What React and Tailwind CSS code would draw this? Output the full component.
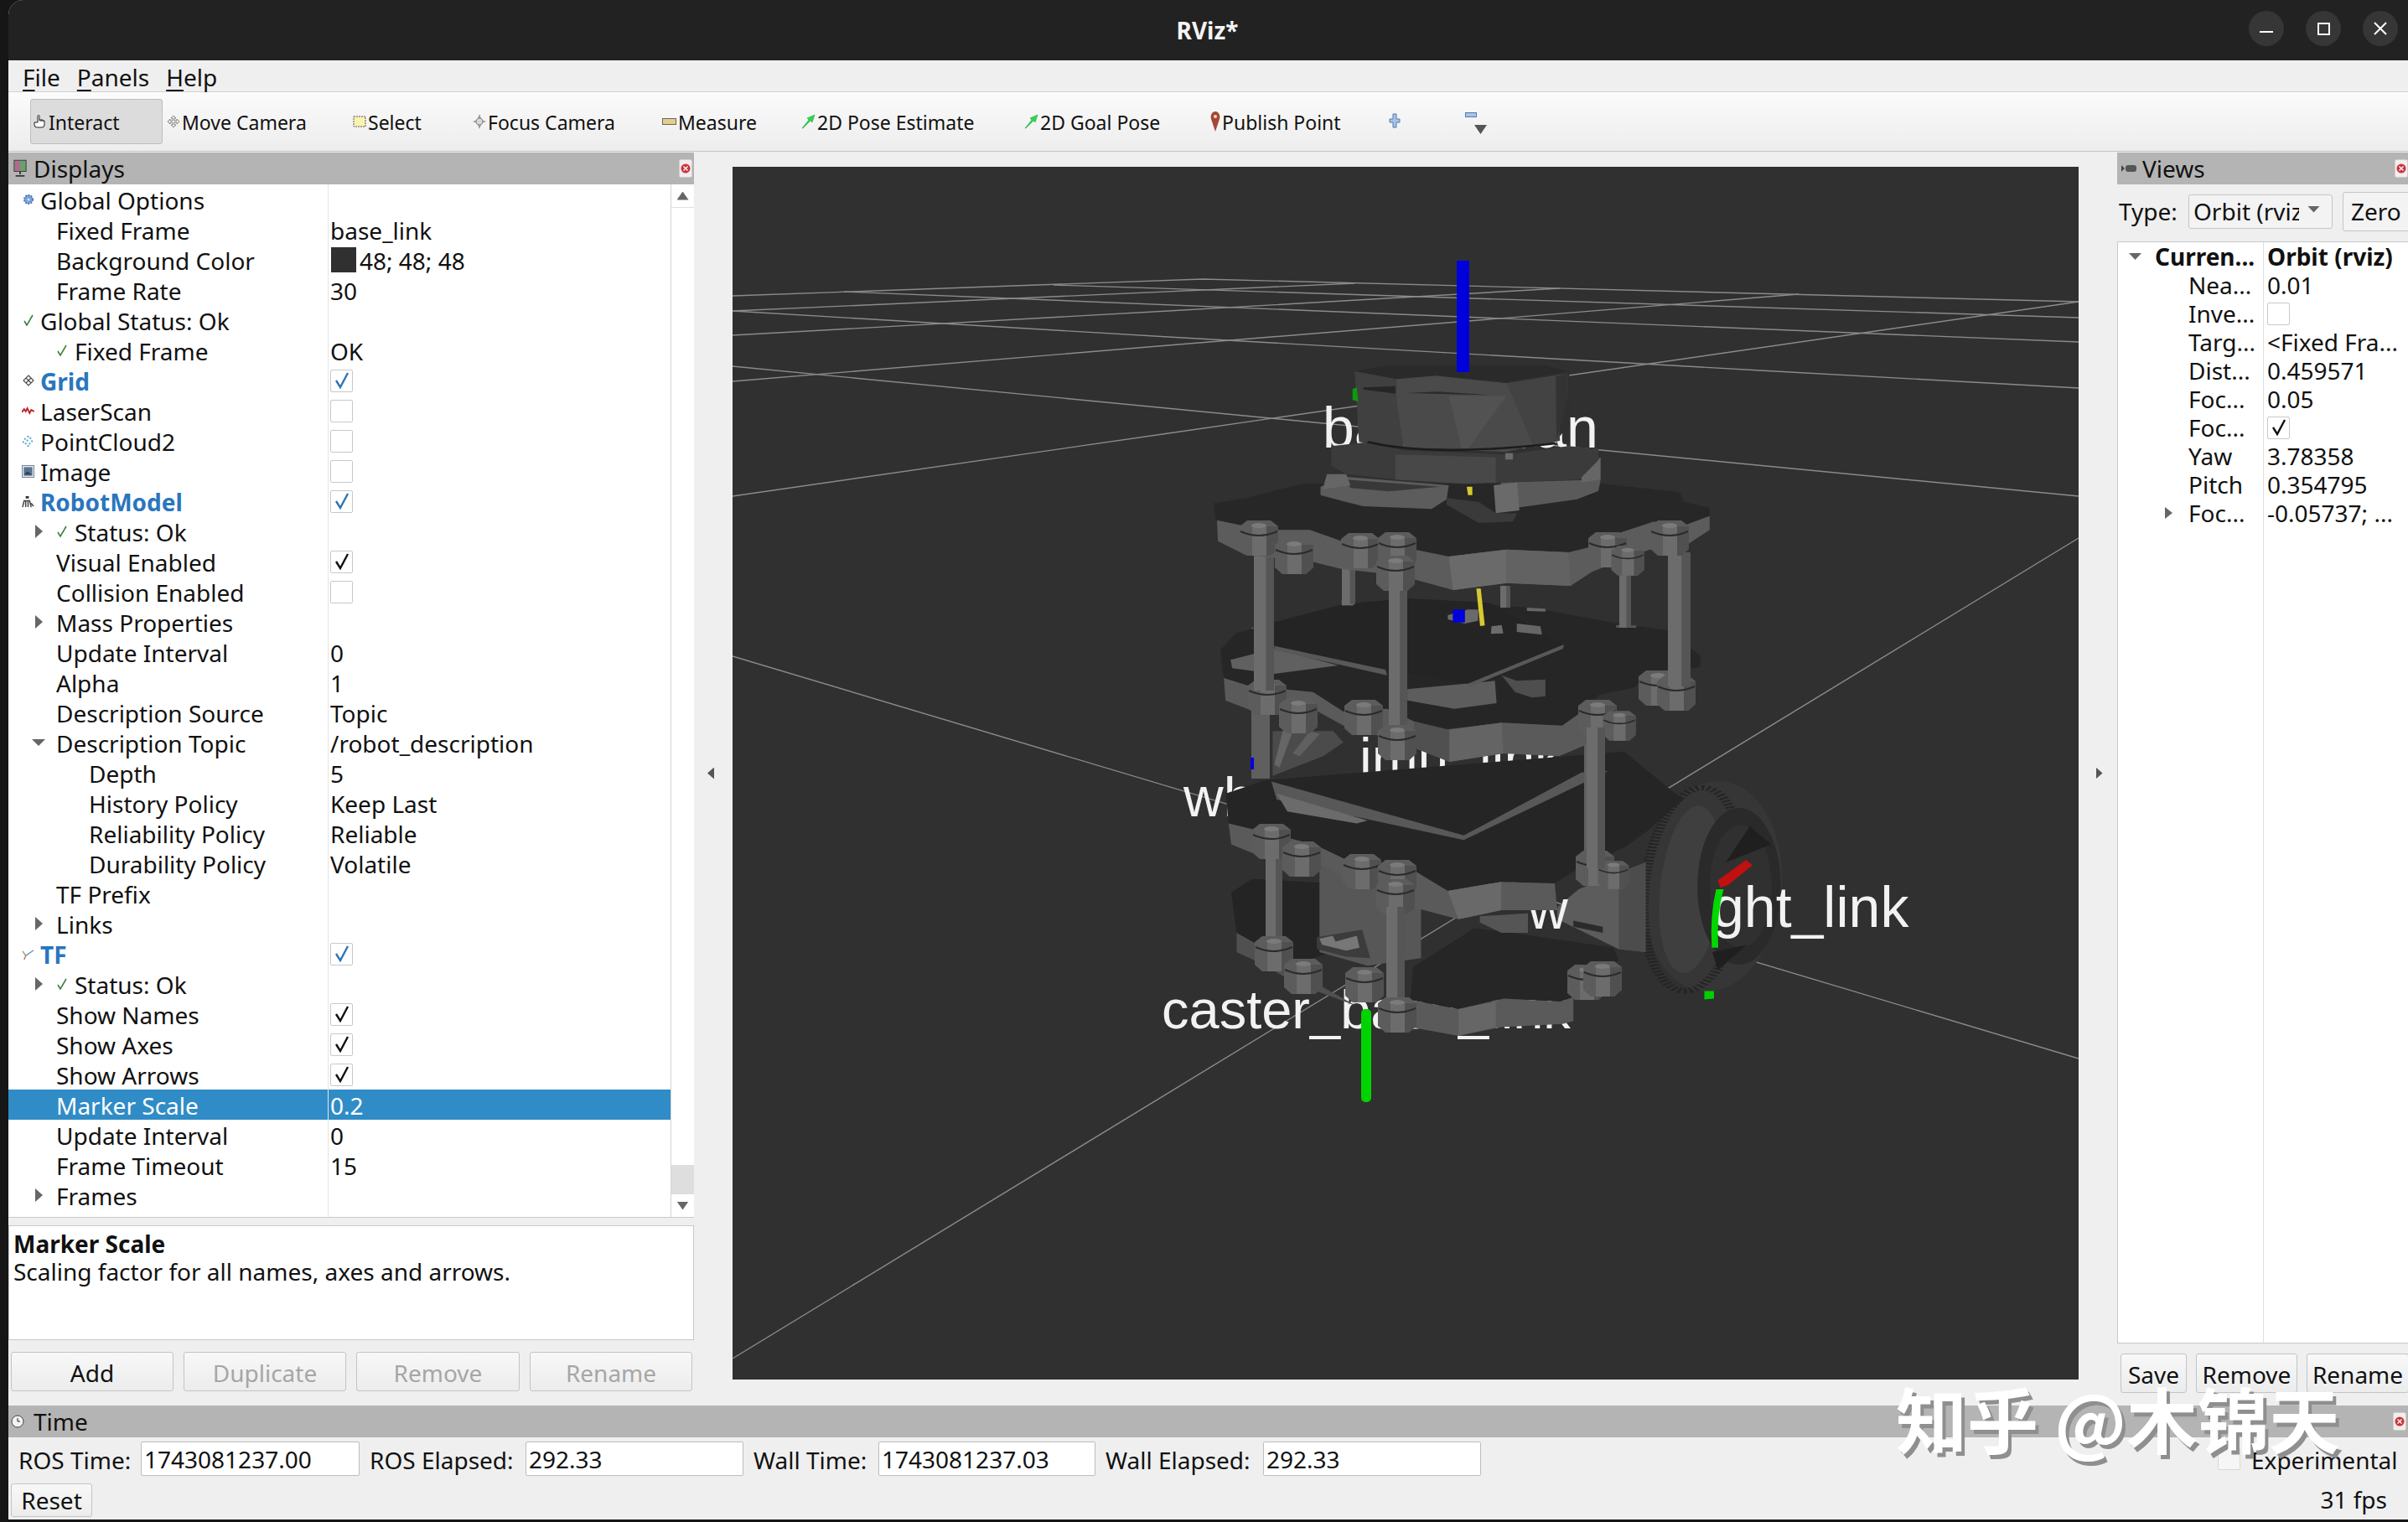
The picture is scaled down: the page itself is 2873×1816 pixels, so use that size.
import React from 'react';

const L0 = 'pl-[16px]';
const L1 = 'pl-[57px]';
const L1A = 'pl-[28px]';
const L2 = 'pl-[96px]';

const displayRows = [
  { label: 'Global Options', pl: L0, icon: 'gear' },
  { label: 'Fixed Frame', pl: L1, value: 'base_link' },
  { label: 'Background Color', pl: L1, value: '48; 48; 48', swatch: true },
  { label: 'Frame Rate', pl: L1, value: '30' },
  { label: 'Global Status: Ok', pl: L0, icon: 'ok' },
  { label: 'Fixed Frame', pl: L1, ok: true, value: 'OK' },
  { label: 'Grid', pl: L0, icon: 'grid', strong: true, check: 'blue' },
  { label: 'LaserScan', pl: L0, icon: 'laser', check: 'off' },
  { label: 'PointCloud2', pl: L0, icon: 'cloud', check: 'off' },
  { label: 'Image', pl: L0, icon: 'image', check: 'off' },
  { label: 'RobotModel', pl: L0, icon: 'robot', strong: true, check: 'blue' },
  { label: 'Status: Ok', pl: L1A, arrow: 'right', ok: true },
  { label: 'Visual Enabled', pl: L1, check: 'on' },
  { label: 'Collision Enabled', pl: L1, check: 'off' },
  { label: 'Mass Properties', pl: L1A, arrow: 'right' },
  { label: 'Update Interval', pl: L1, value: '0' },
  { label: 'Alpha', pl: L1, value: '1' },
  { label: 'Description Source', pl: L1, value: 'Topic' },
  { label: 'Description Topic', pl: L1A, arrow: 'down', value: '/robot_description' },
  { label: 'Depth', pl: L2, value: '5' },
  { label: 'History Policy', pl: L2, value: 'Keep Last' },
  { label: 'Reliability Policy', pl: L2, value: 'Reliable' },
  { label: 'Durability Policy', pl: L2, value: 'Volatile' },
  { label: 'TF Prefix', pl: L1 },
  { label: 'Links', pl: L1A, arrow: 'right' },
  { label: 'TF', pl: L0, icon: 'tf', strong: true, check: 'blue' },
  { label: 'Status: Ok', pl: L1A, arrow: 'right', ok: true },
  { label: 'Show Names', pl: L1, check: 'on' },
  { label: 'Show Axes', pl: L1, check: 'on' },
  { label: 'Show Arrows', pl: L1, check: 'on' },
  { label: 'Marker Scale', pl: L1, value: '0.2', selected: true },
  { label: 'Update Interval', pl: L1, value: '0' },
  { label: 'Frame Timeout', pl: L1, value: '15' },
  { label: 'Frames', pl: L1A, arrow: 'right' },
  { label: 'Tree', pl: L1A, arrow: 'right' },
];

const viewRows = [
  { label: 'Nea...', value: '0.01' },
  { label: 'Inve...', check: 'off' },
  { label: 'Targ...', value: '<Fixed Fra...' },
  { label: 'Dist...', value: '0.459571' },
  { label: 'Foc...', value: '0.05' },
  { label: 'Foc...', check: 'on' },
  { label: 'Yaw', value: '3.78358' },
  { label: 'Pitch', value: '0.354795' },
  { label: 'Foc...', value: '-0.05737; ...', arrow: true },
];

const tools = [
  { label: 'Interact', icon: 'hand', cls: 'w-[158px] ml-[26px] pl-[3px] bg-[#dcdcdc] border border-[#bdbdbd] rounded-[3px] h-[54px]' },
  { label: 'Move Camera', icon: 'move', cls: 'w-[222px] ml-[5px]' },
  { label: 'Select', icon: 'select', cls: 'w-[143px]' },
  { label: 'Focus Camera', icon: 'focus', cls: 'w-[226px]' },
  { label: 'Measure', icon: 'ruler', cls: 'w-[166px]' },
  { label: '2D Pose Estimate', icon: 'arrow', cls: 'w-[266px]' },
  { label: '2D Goal Pose', icon: 'arrow', cls: 'w-[222px]' },
  { label: 'Publish Point', icon: 'pin', cls: 'w-[213px]' },
];

function MiniIcon({ name }) {
  if (name === 'gear') {
    return (
      <svg viewBox="0 0 14 14" className="w-[14px] h-[14px]">
        <circle cx="7" cy="7" r="5" fill="#7da3d8" stroke="#4f78b8" strokeWidth="2" strokeDasharray="2 1.2" />
        <circle cx="7" cy="7" r="1.6" fill="#cfdcf2" />
      </svg>
    );
  }
  if (name === 'ok') {
    return (
      <svg viewBox="0 0 14 16" className="w-[14px] h-[16px]">
        <path d="M2 9 L5 14 L12 2" fill="none" stroke="#3d7f3d" strokeWidth="1.6" />
      </svg>
    );
  }
  if (name === 'grid') {
    return (
      <svg viewBox="0 0 14 14" className="w-[14px] h-[14px]">
        <path d="M7 1 L13 7 L7 13 L1 7 Z M4 4 L10 10 M10 4 L4 10" fill="none" stroke="#444" strokeWidth="1.1" />
      </svg>
    );
  }
  if (name === 'laser') {
    return (
      <svg viewBox="0 0 16 14" className="w-[16px] h-[14px]">
        <path d="M0 9 L3 5 L5 8 L7 4 L10 10 L12 6 L16 8" fill="none" stroke="#c21f2a" strokeWidth="2" />
      </svg>
    );
  }
  if (name === 'cloud') {
    return (
      <svg viewBox="0 0 16 16" className="w-[15px] h-[15px]" fill="#4a9bc9">
        <rect x="7" y="1" width="2" height="2" /><rect x="3" y="4" width="2" height="2" /><rect x="10" y="3" width="2" height="2" />
        <rect x="1" y="8" width="2" height="2" /><rect x="6" y="6" width="2" height="2" /><rect x="12" y="7" width="2" height="2" />
        <rect x="4" y="10" width="2" height="2" /><rect x="9" y="10" width="2" height="2" /><rect x="7" y="13" width="2" height="2" />
      </svg>
    );
  }
  if (name === 'image') {
    return (
      <svg viewBox="0 0 16 16" className="w-[15px] h-[15px]">
        <rect x="0.5" y="0.5" width="15" height="15" fill="#e8edf3" stroke="#6f7a86" />
        <rect x="2.5" y="2.5" width="11" height="11" fill="#5a7494" />
        <path d="M3 12 L7 8 L13 12 Z" fill="#2d3f54" />
      </svg>
    );
  }
  if (name === 'robot') {
    return (
      <svg viewBox="0 0 16 16" className="w-[15px] h-[15px]">
        <rect x="5" y="1" width="4" height="3" fill="#333" />
        <path d="M1 15 L3 7 H10 L12 15 M5 7 V15 M8 7 V15 M12 10 L15 14" fill="none" stroke="#444" strokeWidth="1.6" />
      </svg>
    );
  }
  if (name === 'tf') {
    return (
      <svg viewBox="0 0 16 16" className="w-[15px] h-[15px]">
        <path d="M5 10 L15 3" stroke="#6b8fc0" strokeWidth="1.4" />
        <path d="M5 10 L1 4" stroke="#8c9a5a" strokeWidth="1.4" />
        <path d="M5 10 L3 15" stroke="#a86b5a" strokeWidth="1.4" />
      </svg>
    );
  }
  return null;
}

function ToolIcon({ name }) {
  if (name === 'hand') {
    return (
      <svg viewBox="0 0 16 18" className="w-[16px] h-[18px] shrink-0">
        <path d="M5 10 V2.5 a1 1 0 0 1 2 0 V8 M7 7 h2 v2 M9 7 h2 v2 M11 8 h2 v5 q0 3 -3 3 H4 q-3 0 -3 -3 V10 h4" fill="#fff" stroke="#222" strokeWidth="1" />
      </svg>
    );
  }
  if (name === 'move') {
    return (
      <svg viewBox="0 0 16 16" className="w-[16px] h-[18px] shrink-0">
        <path d="M8 1 L11 4 H9 V7 H12 V5 L15 8 L12 11 V9 H9 V12 H11 L8 15 L5 12 H7 V9 H4 V11 L1 8 L4 5 V7 H7 V4 H5 Z" fill="#f4f4f4" stroke="#777" strokeWidth="0.9" />
      </svg>
    );
  }
  if (name === 'select') {
    return (
      <svg viewBox="0 0 16 16" className="w-[16px] h-[16px] shrink-0">
        <rect x="1" y="2" width="14" height="12" fill="#fbf3b0" stroke="#555" strokeWidth="1" strokeDasharray="2 1" />
      </svg>
    );
  }
  if (name === 'focus') {
    return (
      <svg viewBox="0 0 16 18" className="w-[16px] h-[18px] shrink-0">
        <path d="M8 0 L10 5 H6 Z M8 18 L10 13 H6 Z M0 9 L5 7 V11 Z M16 9 L11 7 V11 Z" fill="#9a9a9a" />
        <circle cx="8" cy="9" r="4" fill="#d8d8d8" stroke="#888" />
      </svg>
    );
  }
  if (name === 'ruler') {
    return (
      <svg viewBox="0 0 17 8" className="w-[17px] h-[8px] shrink-0">
        <rect x="0.5" y="0.5" width="16" height="7" fill="#e2cf8a" stroke="#666" />
      </svg>
    );
  }
  if (name === 'arrow') {
    return (
      <svg viewBox="0 0 17 18" className="w-[17px] h-[18px] shrink-0">
        <path d="M1 17 L9 7 L7 5 L16 1 L13 10 L11 8 L2 17 Z" fill="#2fd54f" stroke="#149c30" strokeWidth="0.5" />
      </svg>
    );
  }
  return (
    <svg viewBox="0 0 12 24" className="w-[12px] h-[24px] shrink-0">
      <path d="M6 24 L1 9 A5.4 6.5 0 1 1 11 9 Z" fill="#a34a36" />
      <circle cx="6" cy="6" r="2" fill="#f0d8d0" />
    </svg>
  );
}

function CloseBadge() {
  return (
    <svg viewBox="0 0 16 22" className="w-[16px] h-[22px] shrink-0">
      <rect x="0.5" y="0.5" width="15" height="21" rx="2" fill="#f3eded" stroke="#cfcfcf" />
      <circle cx="8" cy="11" r="5.5" fill="#c8343c" />
      <path d="M5.5 8.5 L10.5 13.5 M10.5 8.5 L5.5 13.5" stroke="#fff" strokeWidth="1.4" />
    </svg>
  );
}

function Check({ kind }) {
  const colour = kind === 'blue' ? '#2c76b4' : '#111';
  return (
    <div className="w-[27px] h-[27px] bg-white border border-[#c8c8c8] rounded-[2px] flex items-center justify-center shrink-0">
      {kind !== 'off' && (
        <svg viewBox="0 0 20 20" className="w-[20px] h-[20px]">
          <path d="M3 10 L8 18 L17 1" fill="none" stroke={colour} strokeWidth="2.4" />
        </svg>
      )}
    </div>
  );
}

function Arrow({ dir }) {
  if (dir === 'down') {
    return <div className="w-[16px] h-[8px] bg-[#666] [clip-path:polygon(0_0,100%_0,50%_100%)] mr-[13px] shrink-0" />;
  }
  return <div className="w-[9px] h-[16px] ml-[4px] bg-[#666] [clip-path:polygon(0_0,100%_50%,0_100%)] mr-[16px] shrink-0" />;
}

function DisplayRow({ row }) {
  const textColour = row.selected ? 'text-white' : row.strong ? 'text-[#2a76bd] font-bold' : 'text-[#111]';
  return (
    <div className={`flex h-[36px] shrink-0 items-center ${row.selected ? 'bg-[#308cc6]' : ''}`}>
      <div className={`flex items-center h-full w-[382px] shrink-0 border-r border-[#e4e4e4] ${row.pl} ${textColour}`}>
        {row.arrow && <Arrow dir={row.arrow} />}
        {row.icon && (
          <span className="w-[15px] mr-[7px] flex justify-center shrink-0">
            <MiniIcon name={row.icon} />
          </span>
        )}
        {row.ok && (
          <span className="w-[14px] mr-[8px] flex shrink-0">
            <MiniIcon name="ok" />
          </span>
        )}
        <span className="whitespace-nowrap mt-[2px]">{row.label}</span>
      </div>
      <div className={`flex items-center pl-[2px] min-w-0 ${row.selected ? 'text-white' : 'text-[#111]'}`}>
        {row.swatch && <span className="w-[30px] h-[30px] bg-[#303030] mr-[4px] ml-[1px]" />}
        {row.check ? <Check kind={row.check} /> : <span className="whitespace-nowrap mt-[2px]">{row.value}</span>}
      </div>
    </div>
  );
}

function PanelTitle({ icon, title }) {
  return (
    <div className="h-[38px] shrink-0 bg-[#b4b4b4] flex items-center pl-[3px] pr-[2px] text-[#111]">
      <span className="w-[22px] flex justify-center shrink-0 mr-[5px]">{icon}</span>
      <span className="flex-1">{title}</span>
      <CloseBadge />
    </div>
  );
}

function PlainButton({ label, disabled, cls }) {
  return (
    <div className={`h-[47px] flex items-center justify-center border border-[#c4c4c4] rounded-[3px] bg-gradient-to-b from-[#f8f8f8] to-[#ececec] pt-[2px] ${disabled ? 'text-[#a6a6a6]' : 'text-[#111]'} ${cls}`}>
      {label}
    </div>
  );
}

function TimeField({ value, cls }) {
  return (
    <div className={`h-[41px] bg-white border border-[#bdbdbd] rounded-[2px] flex items-center pl-[3px] text-[#111] ${cls}`}>{value}</div>
  );
}

function Post({ x, y1, y2, w = 22 }) {
  return (
    <g>
      <rect x={x} y={y1} width={w} height={y2 - y1} fill="#6c6c6c" />
      <rect x={x + w * 0.6} y={y1} width={w * 0.4} height={y2 - y1} fill="#555" />
    </g>
  );
}

function Nut({ x, y, k = 1 }) {
  return (
    <g transform={`translate(${x} ${y}) scale(${k})`}>
      <polygon points="-23,-14 -14,-21 14,-21 23,-14 23,13 14,21 -14,21 -23,13" fill="#5c5c5c" />
      <polygon points="-8,-14 9,-14 9,21 -8,21" fill="#6c6c6c" />
      <polygon points="9,-14 23,-14 23,13 14,21 9,21" fill="#505050" />
      <path d="M-22 -8 Q0 2 22 -8" fill="none" stroke="#2b2b2b" strokeWidth="2" />
      <ellipse cx="0" cy="-15" rx="9" ry="3" fill="#7b7b7b" />
    </g>
  );
}

function Robot() {
  return (
    <svg viewBox="874 200 1606 1447" className="block w-full h-full">
      {/* grid */}
      <g stroke="#8b8b8b" strokeWidth="1.4" fill="none">
        <path d="M874 354 L1435 334 L2480 361" />
        <path d="M1257 341 L2480 380" />
        <path d="M1007 349 L2480 409" />
        <path d="M874 372 L1394 403 L2100 443 L2480 464" />
        <path d="M874 438 L2480 593" />
        <path d="M874 784 L2480 1264" />
        <path d="M874 372 L1616 339" />
        <path d="M874 401 L1394 372 L1861 345" />
        <path d="M874 456 L1394 413 L2146 352" />
        <path d="M874 593 L1394 518 L2480 361" />
        <path d="M874 1622 L2480 643" />
      </g>

      {/* link names behind the model */}
      <g fontFamily="'Liberation Sans', sans-serif" fill="#f2f2f2">
        <text x="1578" y="535" fontSize="68">base_scan</text>
        <text x="1386" y="1228" fontSize="65">caster_base_link</text>
        <text x="1412" y="975" fontSize="66">wh</text>
      </g>

      {/* wheel */}
      <g transform="translate(1300 780) scale(0.6378 0.3571)">
        <ellipse cx="1165" cy="780" rx="130" ry="352" fill="#363636" transform="rotate(2 1165 780)" />
        <ellipse cx="1130" cy="790" rx="92" ry="340" fill="none" stroke="#242424" strokeWidth="18" strokeDasharray="5 6" transform="rotate(3 1130 790)" />
        <ellipse cx="1125" cy="790" rx="58" ry="280" fill="#3f3f3f" transform="rotate(3 1125 790)" />
        <ellipse cx="1215" cy="780" rx="78" ry="262" fill="#2a2a2a" />
        <ellipse cx="1218" cy="780" rx="58" ry="205" fill="#303030" />
        <polygon points="1235,580 1275,640 1190,700" fill="#1f1f1f" />
        <polygon points="1165,1000 1230,975 1175,1060" fill="#1f1f1f" />
      </g>

      {/* lowest plate */}
      <g transform="translate(1300 780) scale(0.6378 0.3571)">
        <polygon points="265,800 305,755 455,770 455,1000 380,1040 275,935" fill="#242424" />
        <polygon points="275,935 380,1040 430,1040 430,1110 500,1180 380,1100 330,1045 275,1000" fill="#505050" />
        <polygon points="430,640 620,720 620,1020 520,1045 430,1000" fill="#575757" />
        <polygon points="425,950 510,925 525,1020 480,1015 425,990" fill="#3c3c3c" />
        <polygon points="430,955 455,945 460,965 500,945 505,985 480,995 435,975" fill="#777" />
        <polygon points="605,1050 720,920 790,935 980,985 990,1030 930,1060 905,1150 880,1165 775,1155 690,1190 600,1160" fill="#262626" />
        <polygon points="600,1160 690,1190 775,1155 880,1165 905,1150 905,1230 885,1240 770,1250 690,1280 600,1250" fill="#5a5a5a" />
        <polygon points="690,1190 760,1165 760,1250 690,1280" fill="#666" />
        <polygon points="730,880 820,870 820,935 770,935 730,900" fill="#555" />
      </g>
      <Post x={1510} y1={1019} y2={1137} w={20} />
      <Nut x={1520} y={1139} /><Nut x={1555} y={1166} /><Nut x={1628} y={1176} />
      <Nut x={1893} y={1173} /><Nut x={1912} y={1169} />

      {/* wheel mount */}
      <g transform="translate(1300 780) scale(0.6378 0.3571)">
        <polygon points="875,850 915,790 1040,700 1040,1000 990,990 875,890" fill="#5c5c5c" />
        <polygon points="990,740 1040,700 1040,1000 990,990" fill="#4c4c4c" />
        <polygon points="905,895 960,915 960,935 905,915" fill="#2b2b2b" />
      </g>
      <g fontFamily="'Liberation Sans', sans-serif" fill="#f2f2f2">
        <text x="2043" y="1107" fontSize="68">ght_link</text>
        <text x="1823" y="1109" fontSize="66">w</text>
      </g>

      {/* gear behind the second plate, imu label */}
      <g transform="translate(1430 640) scale(0.4018 0.3333)">
        <polygon points="220,700 400,700 430,740 370,790 220,860" fill="#4b4b4b" />
        <polygon points="250,700 280,700 240,830 225,820" fill="#666" />
        <polygon points="330,700 360,710 300,790 280,780" fill="#606060" />
      </g>
      <text x="1622" y="928" fontFamily="'Liberation Sans', sans-serif" fontSize="66" fill="#f2f2f2">imu_link</text>
      <rect x="1493" y="750" width="22" height="180" fill="#5f5f5f" />
      <rect x="1492" y="905" width="4" height="14" fill="#0000dd" />

      {/* second plate */}
      <g transform="translate(1300 780) scale(0.6378 0.3571)">
        <polygon points="255,470 330,425 1000,330 1075,440 1110,490 1090,520 1040,600 1000,650 915,720 870,770 770,765 670,795 600,720 490,700 420,640 330,600 260,570" fill="#252525" />
        <polygon points="260,570 330,600 420,640 490,700 600,720 670,795 770,765 870,770 875,860 770,860 690,890 605,850 600,770 490,760 420,700 320,680 265,640" fill="#5a5a5a" />
        <polygon points="670,795 770,765 770,860 690,890" fill="#696969" />
        <polygon points="340,430 700,610 920,400 970,395 700,625 350,490" fill="#585858" />
        <polygon points="350,470 520,560 500,570 370,530" fill="#6b6b6b" />
      </g>
      <rect x="1890" y="869" width="25" height="168" fill="#606060" />
      <Nut x={1517} y={1005} /><Nut x={1553} y={1026} /><Nut x={1625} y={1041} /><Nut x={1667} y={1048} /><Nut x={1665} y={1071} />
      <Nut x={1903} y={1037} /><Nut x={1925} y={1045} k={0.8} />
      <Post x={1654} y1={1083} y2={1205} w={22} />
      <Nut x={1667} y={1212} />

      {/* axes */}
      <rect x="1624" y="1205" width="12" height="111" rx="5" fill="#00d400" />
      <g transform="translate(1300 780) scale(0.6378 0.3571)">
        <polygon points="1175,760 1228,692 1240,710 1195,775 1180,785" fill="#c01010" />
        <path d="M1172 790 L1186 790 Q1172 880 1176 985 L1164 985 Q1160 880 1172 790 Z" fill="#00d800" />
        <polygon points="1150,1130 1168,1130 1168,1155 1150,1158" fill="#00d000" />
      </g>

      {/* third plate */}
      <g transform="translate(1430 640) scale(0.4018 0.3333)">
        <polygon points="75,510 155,540 250,550 340,560 430,630 560,620 640,665 730,695 900,670 1080,680 1150,620 1190,570 1290,545 1330,510 1400,490 1490,470 1490,430 1395,340 1220,310 1000,260 700,230 230,310 110,350 65,410" fill="#262626" />
        <polygon points="75,510 155,540 250,550 340,560 430,630 560,620 640,665 730,695 900,670 1080,680 1150,620 1190,730 1070,790 905,780 745,810 640,760 635,720 545,720 430,680 340,620 165,630 80,590" fill="#5a5a5a" />
        <polygon points="640,665 745,695 745,810 640,760" fill="#505050" />
        <polygon points="745,695 900,670 905,780 745,810" fill="#646464" />
        <polygon points="95,445 225,405 415,465 225,495 100,475" fill="#606060" />
        <polygon points="620,550 880,520 885,600 760,620 620,590" fill="#5d5d5d" />
        <polygon points="900,500 945,520 1030,515 1030,575 990,580 940,560" fill="#4e4e4e" />
        <polygon points="225,310 430,245 620,225 860,240 1085,390 800,530 555,480 225,395" fill="#242424" />
        <polygon points="1085,390 1082,405 805,542 800,530" fill="#585858" />
        <polygon points="225,395 555,480 560,500 225,410" fill="#585858" />
        <polygon points="740,285 800,265 830,265 830,305 790,315 740,300" fill="#6a6a6a" />
        <rect x="755" y="265" width="36" height="46" fill="#0000dc" />
        <polygon points="825,190 838,190 850,322 836,324" fill="#d8c92f" />
        <polygon points="870,325 900,320 905,350 868,352" fill="#6c6c6c" />
        <polygon points="945,315 1015,325 1020,355 945,345" fill="#666" />
        <polygon points="975,258 1030,262 1030,272 975,270" fill="#666" />
        <polygon points="425,232 460,232 460,250 425,250" fill="#707070" />
        <polygon points="1240,320 1300,322 1300,330 1240,330" fill="#555" />
      </g>
      <Nut x={1512} y={833} /><Nut x={1549} y={855} /><Nut x={1627} y={857} /><Nut x={1906} y={857} />
      <Nut x={1932} y={867} k={0.85} /><Nut x={1978} y={822} /><Nut x={2000} y={828} />
      <Post x={1601} y1={680} y2={722} w={16} />
      <Post x={1932} y1={680} y2={750} w={14} />
      <Post x={1790} y1={700} y2={726} w={12} />
      <Post x={1496} y1={650} y2={825} w={24} />
      <Post x={1657} y1={697} y2={872} w={22} />
      <Post x={1990} y1={660} y2={820} w={27} />
      <Nut x={1667} y={887} />
      <Post x={1893} y1={869} y2={1037} w={22} />

      {/* top plate and lidar */}
      <g transform="translate(1300 280) scale(0.5102 0.3333)">
        <polygon points="290,965 370,945 430,920 500,895 1200,895 1380,925 1390,960 1450,980 1450,1010 1380,1050 1320,1030 1220,1080 1170,1130 1120,1140 975,1130 840,1155 760,1130 700,1105 590,1100 515,1060 440,1060 360,1045 295,1025" fill="#272727" />
        <polygon points="298,1025 360,1045 440,1060 515,1060 590,1100 700,1105 760,1130 840,1155 975,1130 1120,1140 1175,1120 1220,1080 1320,1030 1380,1050 1450,1010 1450,1060 1380,1130 1310,1130 1240,1170 1175,1210 1125,1260 975,1250 850,1275 755,1235 680,1215 590,1200 510,1170 365,1150 300,1100" fill="#5c5c5c" />
        <polygon points="840,1155 975,1130 975,1250 850,1275" fill="#6a6a6a" />
        <polygon points="975,1130 1120,1140 1125,1260 975,1250" fill="#626262" />
        <polygon points="540,905 600,870 840,900 835,950 800,985 640,975 600,960 540,935" fill="#5c5c5c" />
        <polygon points="960,890 1195,880 1190,920 1140,950 1000,980" fill="#5a5a5a" />
        <polygon points="600,880 820,905 700,922 610,910" fill="#383838" />
        <polygon points="835,945 910,960 950,1000 1000,1000 990,1030 910,1035 835,970" fill="#3a3a3a" />
        <polygon points="945,900 1000,890 1005,990 950,1000" fill="#6a6a6a" />
        <polygon points="882,905 895,905 895,935 885,935" fill="#d8c92f" />
        <polygon points="555,860 600,860 610,900 545,915" fill="#666" />
        <polygon points="1150,850 1195,800 1195,880 1150,890" fill="#666" />
        <polygon points="565,760 655,745 735,775 975,790 1120,760 1190,770 1190,810 1145,880 950,890 880,895 720,880 600,860 565,830" fill="#3b3b3b" />
        <polygon points="715,790 950,800 950,890 880,895 715,880" fill="#484848" />
        <polygon points="620,492 720,515 735,770 630,745" fill="#404040" />
        <polygon points="620,492 700,470 1060,470 1120,492 975,530 810,508 718,520" fill="#2a2a2a" />
        <polygon points="1118,495 1122,492 1122,680 1092,740" fill="#2f2f2f" />
        <polygon points="640,550 715,545 715,572 640,557" fill="#262626" />
        <polygon points="718,520 810,508 975,535 1118,500 1118,580 1090,740 975,780 735,770 718,600" fill="#4a4a4a" />
        <polygon points="840,580 975,580 885,770 870,770" fill="#525252" />
        <polygon points="975,535 1090,510 1100,740 1040,765" fill="#434343" />
        <polygon points="1090,510 1118,500 1118,580 1092,740" fill="#333" />
        <polygon points="740,570 815,565 945,578" fill="#2b2b2b" />
        <polygon points="615,555 625,550 628,600 615,595" fill="#0a9c0a" />
        <path d="M650 745 Q800 800 1090 750" fill="none" stroke="#1c1c1c" strokeWidth="8" />
        <polygon points="972,785 990,785 990,808 972,808" fill="#6a6a6a" />
      </g>
      <Nut x={1502} y={643} /><Nut x={1544} y={665} /><Nut x={1623} y={658} /><Nut x={1918} y={657} />
      <Nut x={1942} y={670} k={0.85} /><Nut x={1992} y={643} />
      <Nut x={1667} y={657} /><Nut x={1665} y={685} />
      <rect x="1738" y="312" width="15" height="133" fill="#0000dc" />
    </svg>
  );
}

export default function App() {
  return (
    <div className="relative w-[2873px] h-[1816px] overflow-hidden bg-[#161616] flex font-['Noto_Sans',sans-serif] text-[28px]">
      <div className="w-[10px] shrink-0" />
      <div className="flex-1 min-w-0 h-[1813px] flex flex-col bg-[#efefef] rounded-tl-[18px] overflow-hidden">
        {/* title bar */}
        <div className="h-[72px] shrink-0 bg-[#222222] relative flex items-center justify-center">
          <span className="text-[#f4f4f4] font-bold text-[28px] ml-[-2px]">RViz*</span>
          <div className="absolute right-[12px] top-[13px] flex gap-[26px]">
            <div className="w-[42px] h-[42px] rounded-full bg-[#363636] flex items-center justify-center">
              <div className="w-[16px] h-[2px] bg-white mt-[8px]" />
            </div>
            <div className="w-[42px] h-[42px] rounded-full bg-[#363636] flex items-center justify-center">
              <div className="w-[15px] h-[15px] border-2 border-white" />
            </div>
            <div className="w-[42px] h-[42px] rounded-full bg-[#363636] flex items-center justify-center">
              <svg viewBox="0 0 16 16" className="w-[16px] h-[16px]"><path d="M1 1 L15 15 M15 1 L1 15" stroke="#fff" strokeWidth="2" /></svg>
            </div>
          </div>
        </div>

        {/* menu */}
        <div className="h-[38px] shrink-0 flex items-center pl-[17px] pt-[2px] gap-[20px] text-[#111] border-b border-[#d2d2d2]">
          <span><u className="underline-offset-4">F</u>ile</span>
          <span><u className="underline-offset-4">P</u>anels</span>
          <span><u className="underline-offset-4">H</u>elp</span>
        </div>

        {/* toolbar */}
        <div className="h-[71px] shrink-0 flex items-center text-[23px] text-[#111] bg-gradient-to-b from-[#fbfbfb] to-[#ededed] border-b border-[#c4c4c4]">
          {tools.map((t) => (
            <div key={t.label} className={`flex items-center gap-[2px] shrink-0 ${t.cls}`}>
              <ToolIcon name={t.icon} />
              <span className="whitespace-nowrap mt-[3px]">{t.label}</span>
            </div>
          ))}
          <svg viewBox="0 0 14 18" className="w-[14px] h-[18px] mb-[3px] shrink-0">
            <path d="M5 1 H9 V7 H13 V11 H9 V17 H5 V11 H1 V7 H5 Z" fill="#a8c4e8" stroke="#5479ad" />
          </svg>
          <div className="relative ml-[77px] w-[30px] h-[30px] shrink-0">
            <div className="absolute left-0 top-[4px] w-[14px] h-[6px] bg-[#a8c4e8] border border-[#5479ad]" />
            <div className="absolute left-[11px] top-[19px] w-[15px] h-[11px] bg-[#555] [clip-path:polygon(0_0,100%_0,50%_100%)]" />
          </div>
        </div>

        {/* main area */}
        <div className="flex-1 min-h-0 flex pt-[1px]">
          {/* displays panel */}
          <div className="w-[818px] shrink-0 flex flex-col">
            <PanelTitle
              title="Displays"
              icon={
                <svg viewBox="0 0 18 24" className="w-[16px] h-[24px]">
                  <rect x="1" y="1" width="16" height="15" fill="#6aa070" stroke="#333" />
                  <rect x="2" y="2" width="7" height="13" fill="#b26a8a" />
                  <path d="M9 16 V20 M3 22 H15" stroke="#333" strokeWidth="2" />
                </svg>
              }
            />
            <div className="h-[1233px] shrink-0 bg-white flex border-b border-[#c8c8c8] overflow-hidden">
              <div className="flex-1 min-w-0 flex flex-col overflow-hidden">
                {displayRows.map((row, i) => (
                  <DisplayRow key={i} row={row} />
                ))}
              </div>
              <div className="w-[28px] shrink-0 border-l border-[#d4d4d4] flex flex-col">
                <div className="h-[28px] flex items-center justify-center border-b border-[#e0e0e0]">
                  <div className="w-[14px] h-[10px] bg-[#666] [clip-path:polygon(50%_0,100%_100%,0_100%)]" />
                </div>
                <div className="flex-1" />
                <div className="h-[35px] bg-[#dedede]" />
                <div className="h-[27px] flex items-center justify-center">
                  <div className="w-[14px] h-[10px] bg-[#666] [clip-path:polygon(0_0,100%_0,50%_100%)]" />
                </div>
              </div>
            </div>
            <div className="h-[137px] mt-[9px] shrink-0 bg-white border border-[#c8c8c8] px-[5px] pt-[5px] text-[#111] leading-[33px]">
              <div className="font-bold">Marker Scale</div>
              <div>Scaling factor for all names, axes and arrows.</div>
            </div>
            <div className="flex gap-[12px] pl-[3px] mt-[14px] pr-[2px]">
              <PlainButton label="Add" cls="w-[194px]" />
              <PlainButton label="Duplicate" disabled cls="w-[194px]" />
              <PlainButton label="Remove" disabled cls="w-[195px]" />
              <PlainButton label="Rename" disabled cls="w-[194px]" />
            </div>
          </div>

          {/* render panel */}
          <div className="w-[46px] shrink-0 flex items-center justify-center pb-[14px] pr-[6px]">
            <div className="w-[8px] h-[14px] bg-[#555] [clip-path:polygon(100%_0,100%_100%,0_50%)]" />
          </div>
          <div className="w-[1606px] h-[1447px] mt-[17px] shrink-0 bg-[#303030]">
            <Robot />
          </div>
          <div className="w-[46px] shrink-0 flex items-center justify-center pb-[14px] pl-[3px]">
            <div className="w-[8px] h-[14px] bg-[#555] [clip-path:polygon(0_0,100%_50%,0_100%)]" />
          </div>

          {/* views panel */}
          <div className="flex-1 min-w-0 flex flex-col overflow-hidden">
            <div className="w-[349px]">
              <PanelTitle
                title="Views"
                icon={
                  <svg viewBox="0 0 18 10" className="w-[18px] h-[10px]">
                    <path d="M0 1 L4 5 L0 9 Z" fill="#444" />
                    <rect x="5" y="1" width="13" height="8" rx="3" fill="#555" />
                  </svg>
                }
              />
            </div>
            <div className="flex items-center h-[68px] w-[360px] shrink-0 pl-[2px] pb-[4px]">
              <span className="w-[83px] text-[#111]">Type:</span>
              <div className="w-[172px] h-[41px] border border-[#c4c4c4] rounded-[3px] bg-[#f3f3f3] flex items-center pl-[5px] text-[#111] relative overflow-hidden shrink-0">
                <span className="w-[126px] overflow-hidden whitespace-nowrap">Orbit (rviz)</span>
                <div className="absolute right-[14px] top-[13px] w-[15px] h-[8px] bg-[#666] [clip-path:polygon(0_0,100%_0,50%_100%)]" />
              </div>
              <div className="ml-[12px] w-[90px] h-[47px] border border-[#c4c4c4] rounded-[3px] bg-[#f3f3f3] flex items-center pl-[9px] text-[#111] shrink-0">Zero</div>
            </div>
            <div className="h-[1315px] shrink-0 w-[360px] bg-white border border-[#c8c8c8] flex flex-col relative text-[#111]">
              <div className="flex items-center h-[34px] font-bold">
                <div className="w-[174px] h-full flex items-center border-r border-[#dedede] shrink-0">
                  <div className="w-[15px] h-[8px] ml-[13px] mr-[16px] bg-[#666] [clip-path:polygon(0_0,100%_0,50%_100%)]" />
                  <span className="whitespace-nowrap">Curren...</span>
                </div>
                <span className="pl-[4px] whitespace-nowrap">Orbit (rviz)</span>
              </div>
              {viewRows.map((row, i) => (
                <div key={i} className="flex items-center h-[34px]">
                  <div className="w-[174px] h-full flex items-center pl-[84px] border-r border-[#dedede] shrink-0 relative">
                    {row.arrow && <div className="absolute left-[56px] top-[10px] w-[9px] h-[14px] bg-[#666] [clip-path:polygon(0_0,100%_50%,0_100%)]" />}
                    <span className="whitespace-nowrap">{row.label}</span>
                  </div>
                  <div className="pl-[4px] whitespace-nowrap">{row.check ? <Check kind={row.check} /> : row.value}</div>
                </div>
              ))}
              <div className="flex-1 w-[174px] border-r border-[#dedede]" />
            </div>
            <div className="flex gap-[11px] pl-[4px] mt-[12px] w-[360px]">
              <PlainButton label="Save" cls="w-[79px] shrink-0" />
              <PlainButton label="Remove" cls="w-[121px] shrink-0" />
              <PlainButton label="Rename" cls="w-[122px] shrink-0" />
            </div>
          </div>
        </div>

        {/* time panel */}
        <div className="h-[136px] shrink-0 flex flex-col relative">
          <div className="h-[38px] shrink-0 bg-[#b4b4b4] flex items-center pl-[3px] text-[#111] w-[2863px]">
            <svg viewBox="0 0 16 16" className="w-[16px] h-[18px] mr-[11px] shrink-0">
              <circle cx="8" cy="8" r="7" fill="#f2f2f2" stroke="#444" />
              <path d="M8 4 V8 H11" stroke="#222" fill="none" />
            </svg>
            <span className="flex-1">Time</span>
            <span className="mr-[2px]"><CloseBadge /></span>
          </div>
          <div className="flex items-center mt-[5px] h-[41px] pl-[12px] text-[#111]">
            <span className="w-[146px] shrink-0 mt-[2px]">ROS Time:</span>
            <TimeField value="1743081237.00" cls="w-[261px] shrink-0" />
            <span className="w-[198px] pl-[12px] shrink-0 mt-[2px]">ROS Elapsed:</span>
            <TimeField value="292.33" cls="w-[260px] shrink-0" />
            <span className="w-[161px] pl-[12px] shrink-0 mt-[2px]">Wall Time:</span>
            <TimeField value="1743081237.03" cls="w-[259px] shrink-0" />
            <span className="w-[200px] pl-[12px] shrink-0 mt-[2px]">Wall Elapsed:</span>
            <TimeField value="292.33" cls="w-[260px] shrink-0" />
            <div className="ml-[879px] w-[27px] h-[27px] bg-[#f6f6f6] border border-[#d8d8d8] rounded-[2px] shrink-0" />
            <span className="ml-[13px] whitespace-nowrap mt-[2px]">Experimental</span>
          </div>
          <div className="flex items-center justify-between mt-[9px] pl-[3px] text-[#111]">
            <div className="w-[97px] h-[40px] border border-[#c4c4c4] rounded-[3px] bg-gradient-to-b from-[#f8f8f8] to-[#ececec] flex items-center justify-center">Reset</div>
            <span className="mr-[25px] mt-[-2px]">31 fps</span>
          </div>
        </div>
      </div>

      {/* watermark over the window */}
      <div className="absolute left-[2262px] top-[1636px] text-[85px] leading-[110px] font-bold text-white font-['Noto_Sans_CJK_SC',sans-serif] whitespace-nowrap [text-shadow:4px_5px_0_#8f8f8f]">
        知乎 @木锦天
      </div>
    </div>
  );
}
